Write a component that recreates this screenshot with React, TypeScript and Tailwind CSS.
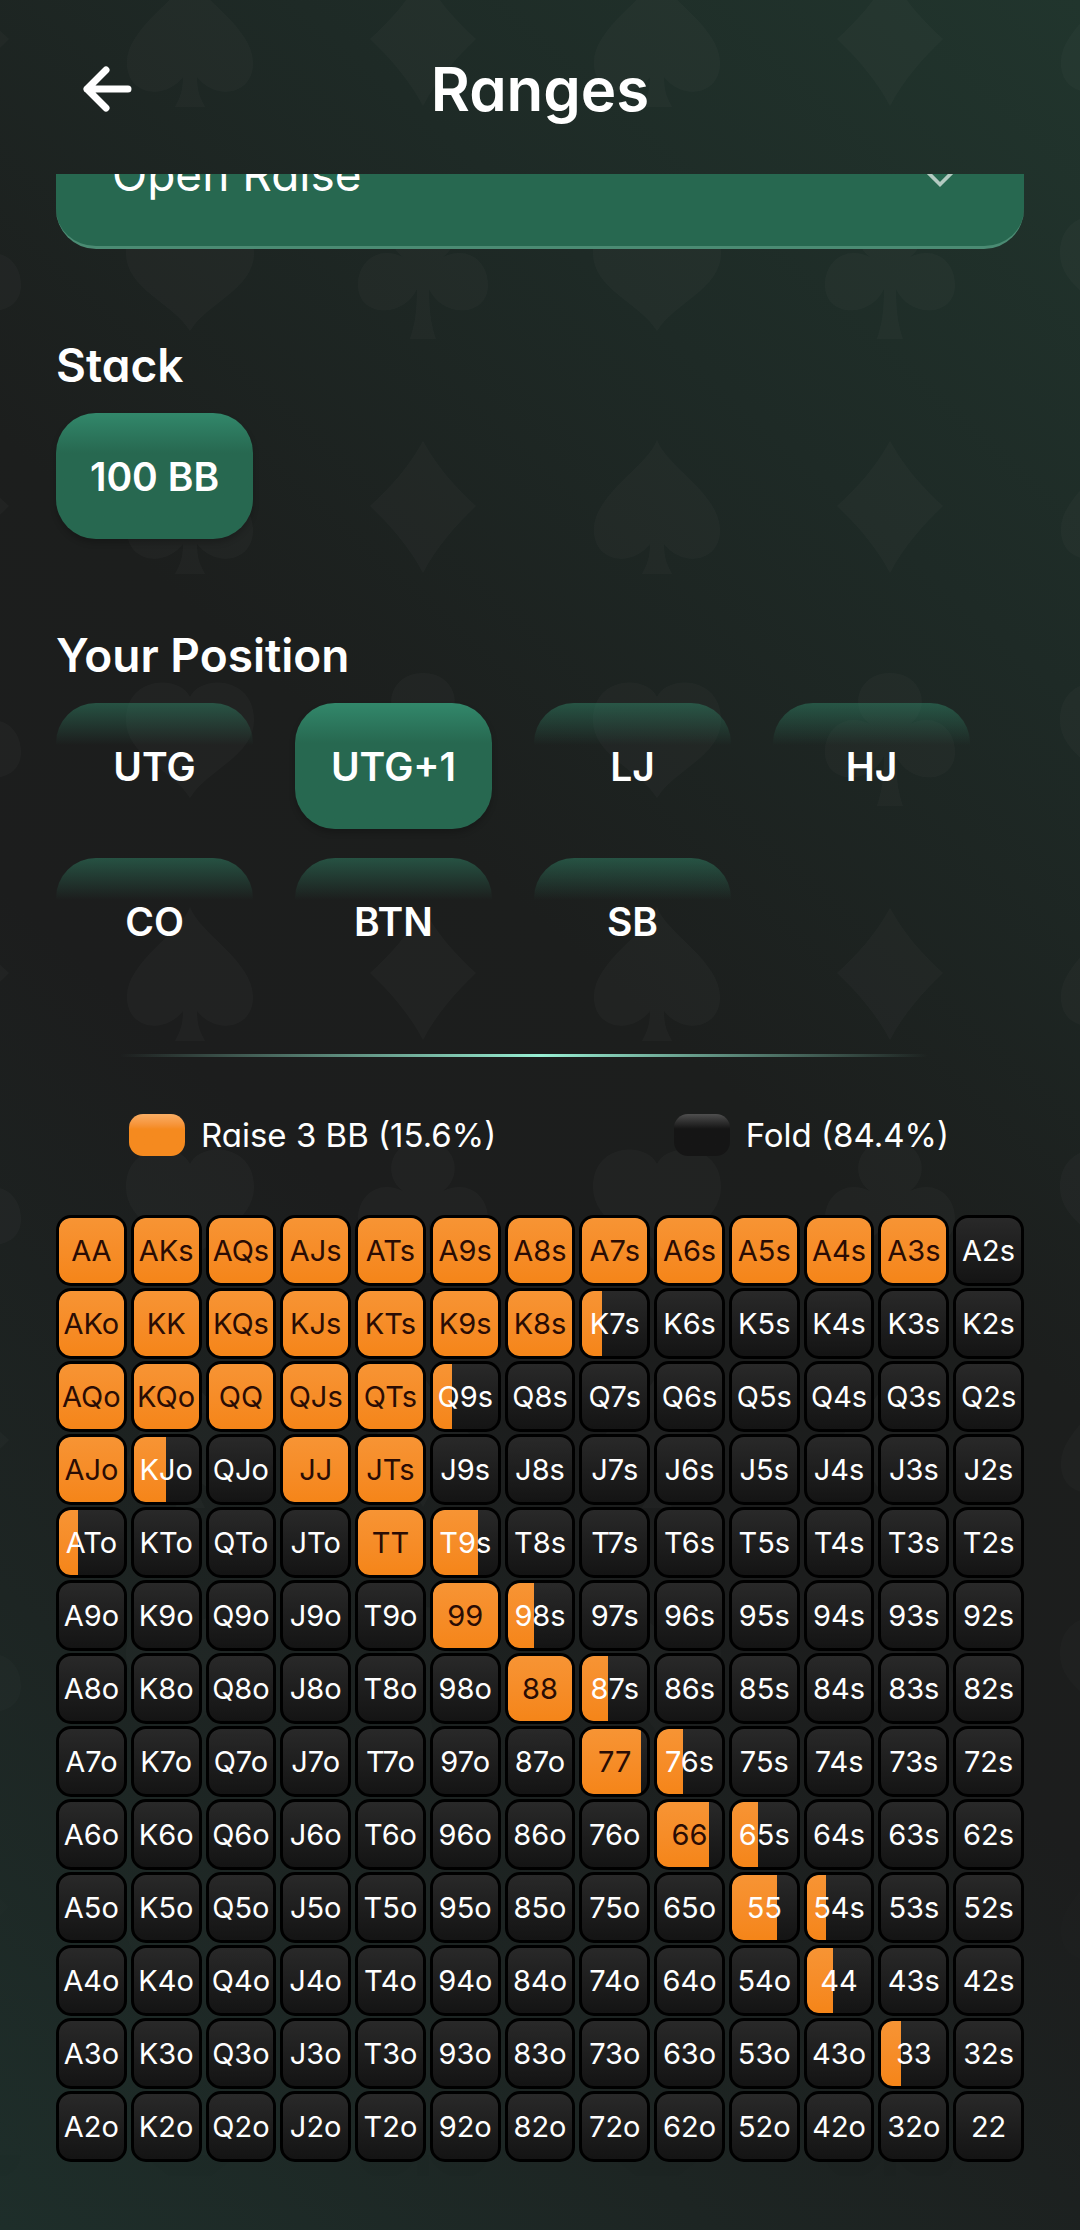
import { useState } from "react";
import clsx from "clsx";

const RANKS = ["A", "K", "Q", "J", "T", "9", "8", "7", "6", "5", "4", "3", "2"];

const POSITIONS = ["UTG", "UTG+1", "LJ", "HJ", "CO", "BTN", "SB"];

// hand -> how often it is raised, in percent
const RAISES: Record<string, number> = {
  AA: 100, AKs: 100, AQs: 100, AJs: 100, ATs: 100, A9s: 100,
  A8s: 100, A7s: 100, A6s: 100, A5s: 100, A4s: 100, A3s: 100,
  AKo: 100, KK: 100, KQs: 100, KJs: 100, KTs: 100, K9s: 100, K8s: 100, K7s: 30,
  AQo: 100, KQo: 100, QQ: 100, QJs: 100, QTs: 100, Q9s: 30,
  AJo: 100, KJo: 50, JJ: 100, JTs: 100,
  ATo: 30, TT: 100, T9s: 70,
  "99": 100, "98s": 40,
  "88": 100, "87s": 40,
  "77": 90, "76s": 40,
  "66": 80, "65s": 40,
  "55": 70, "54s": 30,
  "44": 40,
  "33": 30,
};

function handName(row: number, col: number) {
  if (row === col) return RANKS[row] + RANKS[col];
  return row < col
    ? `${RANKS[row]}${RANKS[col]}s`
    : `${RANKS[col]}${RANKS[row]}o`;
}

function SuitPattern() {
  return (
    <svg
      className="pointer-events-none absolute inset-0 h-full w-full mask-b-from-60% mask-b-to-100% text-[#b9d0c8]/3"
      aria-hidden="true"
    >
      <defs>
        <pattern
          id="suits"
          x="73"
          y="-77"
          width="467"
          height="467"
          patternUnits="userSpaceOnUse"
        >
          <g fill="currentColor">
            <path d="M117 50C126 76 180 104 180 140C180 172 143 178 124 154C124 170 128 176 132 184H102C106 176 110 170 110 154C91 178 54 172 54 140C54 104 108 76 117 50Z" />
            <path d="M350 51C364 77 384 99 403 116C384 134 364 156 350 183C336 156 316 134 297 116C316 99 336 77 350 51Z" />
            <path d="M117 307C106 284 53 286 53 330C53 366 100 380 117 408C134 380 181 366 181 330C181 286 128 284 117 307Z" />
            <path d="M350 283C318 283 308 318 330 334C306 322 285 338 285 362C285 394 330 396 344 366C344 392 341 404 337 416H363C359 404 356 392 356 366C370 396 415 394 415 362C415 338 394 322 370 334C392 318 382 283 350 283Z" />
          </g>
        </pattern>
      </defs>
      <rect width="100%" height="100%" fill="url(#suits)" />
    </svg>
  );
}

function Chip({
  label,
  active,
  onClick,
}: {
  label: string;
  active: boolean;
  onClick?: () => void;
}) {
  return (
    <button
      type="button"
      aria-pressed={active}
      onClick={onClick}
      className={clsx(
        "h-[126px] rounded-[40px] pt-0.5 text-center text-[39px] font-semibold whitespace-nowrap",
        active
          ? "bg-linear-to-b from-[#32886b] to-[#276850] to-[40px] shadow-[0_4px_6px_rgba(0,0,0,0.2)]"
          : "bg-linear-to-b from-[#2f7d62]/55 to-transparent to-[42px]"
      )}
    >
      {label}
    </button>
  );
}

function HandCell({ hand }: { hand: string }) {
  const raise = RAISES[hand] ?? 0;
  return (
    <div className="relative flex h-[71px] items-center justify-center overflow-hidden rounded-[15px] border-3 border-black bg-linear-to-b from-[#292929] to-[#141414]">
      {raise > 0 && (
        <div
          className="absolute inset-y-0 left-0 rounded-l-[11px] bg-linear-to-b from-[#f79434] to-[#f58518]"
          style={{ width: `${raise}%` }}
        />
      )}
      <span
        className={clsx(
          "relative text-[29px] leading-8",
          raise >= 80 ? "text-[#2a0c04]" : "text-white"
        )}
      >
        {hand}
      </span>
    </div>
  );
}

export default function App() {
  const [position, setPosition] = useState("UTG+1");

  return (
    <div className="relative min-h-screen bg-[#1c1c1c] bg-[linear-gradient(222deg,#21352d_0%,#1e2a26_22%,#1c1e1d_44%,#1c1d1d_58%,#1d2523_80%,#1e2e2a_100%)] font-[Inter,'Open_Sans',sans-serif] text-white [font-feature-settings:'cv11']">
      <SuitPattern />

      <div className="relative">
        <header className="grid h-[174px] grid-cols-[80px_1fr_80px] items-center px-[66px]">
          <button type="button" aria-label="Back" className="flex size-20 items-center justify-center">
            <svg
              className="size-[52px]"
              viewBox="0 0 52 52"
              fill="none"
              stroke="currentColor"
              strokeWidth="7"
              strokeLinecap="round"
              strokeLinejoin="round"
            >
              <path d="M26 9L7 28L26 47M7 28H48" />
            </svg>
          </button>
          <h1 className="pt-1 text-center text-[60px] leading-[72px] font-semibold">
            Ranges
          </h1>
        </header>

        <main className="overflow-hidden px-14 pb-16">
          {/* scrolled partly under the header */}
          <div className="relative -mt-[72px]">
            <select
              aria-label="Action"
              className="h-[147px] w-full appearance-none rounded-[40px] border-b-3 border-[#4b8b73] bg-[#276850] px-14 text-[46px]"
            >
              <option>Open Raise</option>
            </select>
            <svg
              className="pointer-events-none absolute top-[50px] right-[58px] size-[52px] text-[#b3cac1]"
              viewBox="0 0 24 24"
              fill="none"
              stroke="currentColor"
              strokeWidth="1.7"
            >
              <path d="M6 9l6 6l6 -6" />
            </svg>
          </div>

          <section className="mt-[88px]">
            <h2 className="text-[46px] leading-14 font-semibold">Stack</h2>
            <div className="mt-5 grid grid-cols-[repeat(4,197px)] gap-x-[42px] gap-y-[29px]">
              <Chip label="100 BB" active />
            </div>
          </section>

          <section className="mt-[88px]">
            <h2 className="text-[46px] leading-14 font-semibold">
              Your Position
            </h2>
            <div className="mt-5 grid grid-cols-[repeat(4,197px)] gap-x-[42px] gap-y-[29px]">
              {POSITIONS.map((name) => (
                <Chip
                  key={name}
                  label={name}
                  active={name === position}
                  onClick={() => setPosition(name)}
                />
              ))}
            </div>
          </section>

          <hr className="mt-[70px] mr-24 ml-16 h-[3px] border-0 bg-linear-to-r from-transparent via-[#98efd3] via-52% to-transparent" />

          <div className="mt-[57px] flex justify-between pr-[75px] pl-[73px] text-[33px] leading-[42px]">
            <div className="flex items-center gap-4">
              <span className="h-[42px] w-14 rounded-[14px] bg-linear-to-b from-[#f9ad63] to-[#f58a1f] to-[15px]" />
              Raise 3 BB (15.6%)
            </div>
            <div className="flex items-center gap-4">
              <span className="h-[42px] w-14 rounded-[14px] bg-linear-to-b from-[#4f4f4f] to-[#151515] to-[15px]" />
              Fold (84.4%)
            </div>
          </div>

          <div className="mt-[59px] grid grid-cols-13 gap-x-1 gap-y-0.5">
            {RANKS.map((_, row) =>
              RANKS.map((_, col) => (
                <HandCell key={`${row}-${col}`} hand={handName(row, col)} />
              ))
            )}
          </div>
        </main>
      </div>
    </div>
  );
}
